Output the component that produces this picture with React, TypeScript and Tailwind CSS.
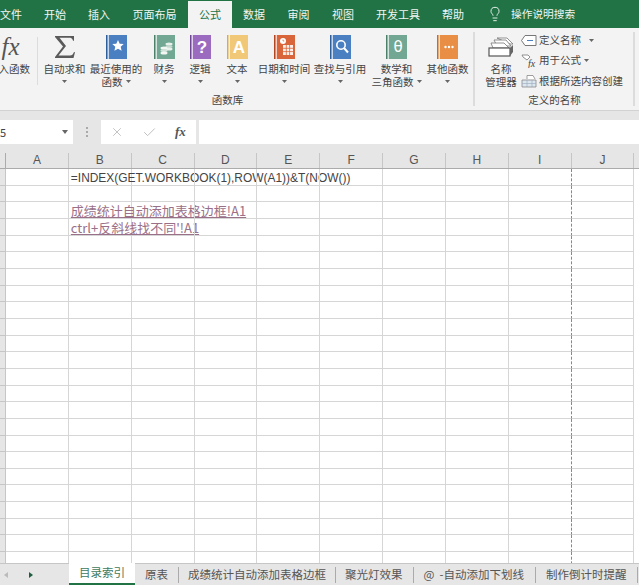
import React from 'react';
import { Lightbulb, X, Check } from 'lucide-react';

const cjk = { fontFamily: '"Noto Sans CJK SC", "Liberation Sans", sans-serif' };

const menuTabs = [
  { label: '开始', w: 'w-[44px]' },
  { label: '插入', w: 'w-[44px]' },
  { label: '页面布局', w: 'w-[67px]' },
];
const menuTabsRight = [
  { label: '数据', w: 'w-[44px]' },
  { label: '审阅', w: 'w-[45px]' },
  { label: '视图', w: 'w-[44px]' },
  { label: '开发工具', w: 'w-[66px]' },
  { label: '帮助', w: 'w-[44px]' },
];

const Caret = () => (
  <svg width="5" height="3" viewBox="0 0 5 3" className="block">
    <path d="M0 0h5L2.500 3z" fill="#666" />
  </svg>
);

const Book = ({ color, spine, children }: { color: string; spine: string; children: React.ReactNode }) => (
  <svg width="21" height="24" viewBox="0 0 21 24" className="block">
    <rect x="0" y="0" width="21" height="24" fill={color} />
    <rect x="0" y="0" width="1.500" height="24" fill={spine} />
    <rect x="1.500" y="0" width="1.500" height="24" fill="#fff" opacity="0.7" />
    {children}
  </svg>
);

const Sigma = () => (
  <svg width="22" height="24" viewBox="0 0 22 24" className="block">
    <path d="M1 1h19v5l-1-.5C18 3 17 2.800 15 2.800H5.500L12 11 4.500 20.500H16c2 0 3-1 4-3.500l1 .2-1.500 5.800H1v-1l8-10.500L1 2z" fill="#5a5a5a" />
  </svg>
);

const ribbonItems: { w: string; lines: string[]; icon: React.ReactNode; inlineCaret?: boolean }[] = [
  { w: 'w-[53px]', lines: ['自动求和'], icon: <Sigma /> },
  {
    w: 'w-[50px]', lines: ['最近使用的', '函数'], inlineCaret: true,
    icon: (
      <Book color="#4a7fc1" spine="#2f5f9a">
        <path d="M12 5l1.700 3.700 4 .4-3 2.700.9 4L12 13.800l-3.600 2 .9-4-3-2.700 4-.4z" fill="#fff" />
      </Book>
    ),
  },
  {
    w: 'w-[46px]', lines: ['财务'],
    icon: (
      <Book color="#72a893" spine="#4c8069">
        <ellipse cx="15" cy="9" rx="3.500" ry="1.500" fill="#e8f0ec" />
        <ellipse cx="15" cy="11.500" rx="3.500" ry="1.500" fill="#c5d8cf" />
        <ellipse cx="15" cy="14" rx="3.500" ry="1.500" fill="#e8f0ec" />
        <ellipse cx="10" cy="13" rx="3.500" ry="1.500" fill="#f2f6f4" />
        <ellipse cx="10" cy="15.500" rx="3.500" ry="1.500" fill="#d3e2db" />
        <ellipse cx="10" cy="18" rx="3.500" ry="1.500" fill="#f2f6f4" />
      </Book>
    ),
  },
  {
    w: 'w-[26px]', lines: ['逻辑'],
    icon: (
      <Book color="#9b6bc0" spine="#6f4596">
        <text x="12" y="18" textAnchor="middle" fontSize="17" fontWeight="700" fill="#fff" fontFamily="Liberation Sans">?</text>
      </Book>
    ),
  },
  {
    w: 'w-[48px]', lines: ['文本'],
    icon: (
      <Book color="#f0c878" spine="#dca94e">
        <text x="12" y="18" textAnchor="middle" fontSize="17" fontWeight="700" fill="#fff" fontFamily="Liberation Sans">A</text>
      </Book>
    ),
  },
  {
    w: 'w-[46px]', lines: ['日期和时间'],
    icon: (
      <Book color="#d9663a" spine="#b14620">
        <rect x="9" y="10" width="10" height="10" fill="#fff" opacity="0.9" />
        <path d="M9 13.300h10M9 16.600h10M12.300 10v10M15.600 10v10" stroke="#d9663a" strokeWidth="0.8" />
        <circle cx="9" cy="6" r="3" fill="#fff" />
        <path d="M9 4.500V6h1.300" stroke="#d9663a" strokeWidth="0.7" fill="none" />
      </Book>
    ),
  },
  {
    w: 'w-[66px]', lines: ['查找与引用'],
    icon: (
      <Book color="#4a7fc1" spine="#2f5f9a">
        <circle cx="11" cy="10" r="4.200" fill="none" stroke="#fff" strokeWidth="1.600" />
        <path d="M14 13l4 4.500" stroke="#fff" strokeWidth="2" />
      </Book>
    ),
  },
  {
    w: 'w-[47px]', lines: ['数学和', '三角函数'], inlineCaret: true,
    icon: (
      <Book color="#72a893" spine="#4c8069">
        <text x="12" y="17" textAnchor="middle" fontSize="15" fill="#fff" fontFamily="DejaVu Sans">θ</text>
      </Book>
    ),
  },
  {
    w: 'w-[55px]', lines: ['其他函数'],
    icon: (
      <Book color="#e88f45" spine="#c96c20">
        <circle cx="8.500" cy="12" r="1.200" fill="#fff" />
        <circle cx="12" cy="12" r="1.200" fill="#fff" />
        <circle cx="15.500" cy="12" r="1.200" fill="#fff" />
      </Book>
    ),
  },
];

const RibbonButton = ({ item }: { item: (typeof ribbonItems)[number] }) => (
  <div className={`${item.w} flex flex-col items-center pt-[7px] shrink-0`}>
    <div className="h-[24px]">{item.icon}</div>
    <div className="mt-[3px] text-[10.500px] leading-[13px] whitespace-nowrap text-[#444]">{item.lines[0]}</div>
    {item.lines[1] ? (
      <div className="flex items-center gap-[3px] text-[10.500px] leading-[13px] whitespace-nowrap text-[#444]">
        {item.lines[1]}
        {item.inlineCaret && <Caret />}
      </div>
    ) : (
      <div className="h-[13px] flex items-center"><Caret /></div>
    )}
  </div>
);

const NameManagerIcon = () => (
  <svg width="26" height="20" viewBox="0 0 26 20" className="block">
    <path d="M9 1h10l6 6-3 0z" fill="#fff" stroke="#777" strokeWidth="0.8" />
    <path d="M6 3h12l5 6H9z" fill="#fff" stroke="#777" strokeWidth="0.8" />
    <path d="M3 6h13l5 5H5z" fill="#fff" stroke="#777" strokeWidth="0.8" />
    <rect x="1" y="11" width="21" height="8" fill="#fff" stroke="#555" strokeWidth="1.200" />
    <path d="M22 11l3-3v7l-3 4z" fill="#666" />
  </svg>
);

const rowIcons = {
  tag: (
    <svg width="16" height="11" viewBox="0 0 16 11" className="block">
      <path d="M4 .5h11v10H4L.5 5.500z" fill="#fff" stroke="#777" />
      <path d="M6 5.500h6" stroke="#4a7fc1" />
    </svg>
  ),
  fx: (
    <svg width="16" height="15" viewBox="0 0 16 15" className="block">
      <path d="M1 2h6l2 2-3 3-4-3z" fill="#fff" stroke="#777" strokeWidth="0.8" />
      <text x="7" y="14" fontSize="10" fontStyle="italic" fill="#444" fontFamily="Liberation Serif">fx</text>
    </svg>
  ),
  table: (
    <svg width="16" height="14" viewBox="0 0 16 14" className="block">
      <path d="M1 6h14v7H1z" fill="#dce6ef" stroke="#888" strokeWidth="0.8" />
      <path d="M1 9.500h14M6 6v7M11 6v7" stroke="#9ab" strokeWidth="0.6" />
      <path d="M6 5V1.500h6L14 5" fill="#fff" stroke="#888" strokeWidth="0.8" />
    </svg>
  ),
};

const columns = ['A', 'B', 'C', 'D', 'E', 'F', 'G', 'H', 'I', 'J'];
const rows = Array.from({ length: 24 }, (_, i) => i);

const cellText: Record<string, React.ReactNode> = {
  '0-B': <span className="block text-[#444] text-[11.950px] leading-[13px]" style={{ fontFamily: '"Liberation Sans", "Noto Sans CJK SC", sans-serif' }}>=INDEX(GET.WORKBOOK(1),ROW(A1))&amp;T(NOW())</span>,
  '2-B': <span className="text-[#9a7088] underline text-[13px]" style={cjk}>成绩统计自动添加表格边框!A1</span>,
  '3-B': <span className="text-[#9a7088] underline text-[13px]" style={cjk}>ctrl+反斜线找不同'!A1</span>,
};

const sheetTabs = [
  { label: '原表', pad: 'px-[10px]' },
  { label: '成绩统计自动添加表格边框', pad: 'px-[9px]' },
  { label: '聚光灯效果', pad: 'pl-[9px] pr-[10px]' },
  { label: '@\u00a0\u00a0-自动添加下划线', pad: 'pl-[10px] pr-[11px]' },
  { label: '制作倒计时提醒', pad: 'px-[10px]' },
];

export default function App() {
  return (
    <div className="w-[639px] h-[585px] overflow-hidden flex flex-col bg-white select-none" style={cjk}>
      {/* tab strip */}
      <div className="h-[28px] shrink-0 bg-[#217346] flex items-end text-[11px] text-[#f1f6f3]">
        <div className="w-[44px] -ml-[11px] h-[28px] flex items-center justify-center shrink-0">文件</div>
        {menuTabs.map((t) => (
          <div key={t.label} className={`${t.w} h-[28px] flex items-center justify-center shrink-0`}>{t.label}</div>
        ))}
        <div className="w-[44px] h-[27px] bg-[#f3f3f3] flex items-center justify-center shrink-0 text-[#217346]">公式</div>
        {menuTabsRight.map((t) => (
          <div key={t.label} className={`${t.w} h-[28px] flex items-center justify-center shrink-0`}>{t.label}</div>
        ))}
        <div className="h-[28px] flex items-center pl-[12px] gap-[8px] whitespace-nowrap text-[10.700px]">
          <Lightbulb size={16} strokeWidth={1.4} color="#f1f6f3" />
          <span>操作说明搜索</span>
        </div>
      </div>

      {/* ribbon */}
      <div className="h-[83px] shrink-0 bg-[#f3f3f3] border-b border-[#d2d2d2] flex text-[#444]">
        <div className="w-[494px] -ml-[19px] shrink-0 flex flex-col border-r-2 border-[#dcdcdc] mt-[4px] mb-[4px]">
          <div className="flex h-[71px] -mt-[4px]">
            <div className="w-[56px] shrink-0 flex flex-col items-center pt-[7px]">
              <div className="h-[24px] pl-[3px] text-[25px] leading-[24px] italic text-[#555]" style={{ fontFamily: '"Liberation Serif", serif' }}>fx</div>
              <div className="mt-[3px] text-[10.500px] leading-[13px] whitespace-nowrap">插入函数</div>
            </div>
            <div className="w-[1px] h-[48px] mt-[9px] bg-[#dcdcdc] shrink-0" />
            {ribbonItems.map((item) => (
              <RibbonButton key={item.lines[0]} item={item} />
            ))}
          </div>
          <div className="text-center text-[10.500px] leading-[13px] mt-[-3px] pl-[1px]">函数库</div>
        </div>
        <div className="w-[160px] shrink-0 flex flex-col border-r-2 border-[#dcdcdc] mt-[4px] mb-[4px]">
          <div className="flex h-[71px] -mt-[4px]">
            <div className="w-[46px] ml-[3px] shrink-0 flex flex-col items-center pt-[9px]">
              <div className="h-[25px]"><NameManagerIcon /></div>
              <div className="text-[10.500px] leading-[13px] whitespace-nowrap">名称</div>
              <div className="text-[10.500px] leading-[13px] whitespace-nowrap">管理器</div>
            </div>
            <div className="flex flex-col pt-[2px] text-[10.500px] whitespace-nowrap -ml-[3px]">
              <div className="h-[20px] flex items-center gap-[1px]">
                <span className="w-[17px]">{rowIcons.tag}</span>定义名称<span className="ml-[7px]"><Caret /></span>
              </div>
              <div className="h-[20px] flex items-center gap-[1px]">
                <span className="w-[17px]">{rowIcons.fx}</span>用于公式<span className="ml-[2px]"><Caret /></span>
              </div>
              <div className="h-[21px] flex items-center gap-[1px]">
                <span className="w-[17px]">{rowIcons.table}</span>根据所选内容创建
              </div>
            </div>
          </div>
          <div className="text-center text-[10.500px] leading-[13px] mt-[-3px] pl-[1px]">定义的名称</div>
        </div>
      </div>

      {/* formula bar */}
      <div className="h-[42px] shrink-0 bg-[#e6e6e6] flex items-start pt-[9px]">
        <div className="w-[73px] h-[24px] bg-white flex items-center justify-between pr-[5px] shrink-0 text-[11px] text-[#444]">
          <span>5</span>
          <svg width="6" height="4" viewBox="0 0 6 4"><path d="M0 0h6L3 4z" fill="#666" /></svg>
        </div>
        <div className="w-[28px] h-[24px] flex items-center justify-center shrink-0">
          <span className="w-[2px] h-[10px] border-l-2 border-dotted border-[#aaa]" />
        </div>
        <div className="w-[95px] h-[24px] bg-white flex items-center shrink-0 pl-[9px] gap-[18px] text-[#bbb]">
          <X size={14} strokeWidth={1.5} />
          <Check size={15} strokeWidth={1.5} />
          <span className="text-[13px] font-bold italic text-[#555]" style={{ fontFamily: '"Liberation Serif", serif' }}>fx</span>
        </div>
        <div className="flex-1 h-[24px] ml-[3px] bg-white" />
      </div>

      {/* column headers */}
      <div className="h-[16px] shrink-0 flex bg-[#e6e6e6] border-b border-[#ababab] text-[12px] text-[#555]" style={{ fontFamily: '"Liberation Sans", sans-serif' }}>
        <div className="w-[6px] shrink-0 border-r border-[#ababab]" />
        {columns.map((c) => (
          <div key={c} className="w-[62.850px] shrink-0 flex items-center justify-center border-r border-[#c6c6c6] leading-[15px]">{c}</div>
        ))}
      </div>

      {/* grid */}
      <div className="flex-1 overflow-hidden">
        {rows.map((r) => (
          <div key={r} className="h-[16.670px] flex">
            <div className="w-[6px] shrink-0 bg-[#e6e6e6] border-r border-b border-[#c6c6c6]" />
            {columns.map((c) => (
              <div
                key={c}
                className={`w-[62.850px] shrink-0 border-b border-r border-[#d6d6d6] flex items-end pl-[2px] whitespace-nowrap leading-[15px] ${
                  c === 'I' ? 'border-r-[#888] [border-right-style:dashed]' : ''
                }`}
              >
                {cellText[`${r}-${c}`]}
              </div>
            ))}
          </div>
        ))}
      </div>

      {/* sheet tabs */}
      <div className="h-[22px] shrink-0 bg-[#e6e6e6] border-t border-[#c6c6c6] flex items-stretch text-[11.500px] text-[#555]">
        <div className="w-[69px] shrink-0 flex items-center gap-[21px] pl-[4px]">
          <svg width="4" height="6" viewBox="0 0 4 6"><path d="M4 0v6L0 3z" fill="#bbb" /></svg>
          <svg width="4" height="6" viewBox="0 0 4 6"><path d="M0 0v6l4-3z" fill="#1f5f3f" /></svg>
        </div>
        <div className="w-[66px] shrink-0 -mt-[1px] bg-white border-b-2 border-[#217346] flex items-center justify-center text-[#3f7a5e]">目录索引</div>
        {sheetTabs.map((t) => (
          <div key={t.label} className="flex items-center shrink-0">
            <span className={`${t.pad} whitespace-nowrap`}>{t.label}</span>
            <span className="w-px h-[16px] bg-[#aaa]" />
          </div>
        ))}
      </div>
    </div>
  );
}
